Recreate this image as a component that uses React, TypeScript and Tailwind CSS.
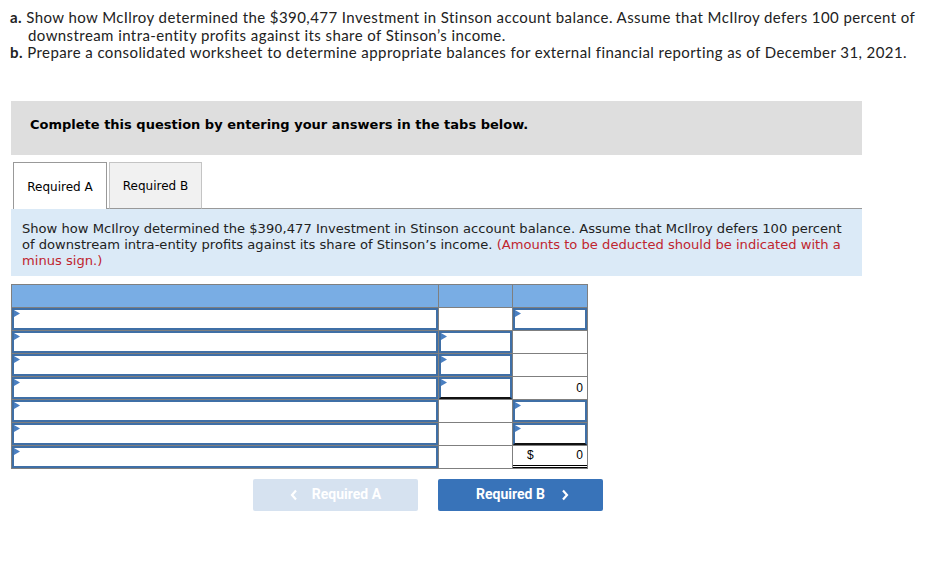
import React from "react";

const Tri = () => (
  <svg className="absolute left-0 top-0" width="6" height="8" viewBox="0 0 6 8">
    <path d="M0 0 L6 3.5 L0 7 Z" fill="#4a7fc1" />
  </svg>
);

type Cell = { kind: "input" | "empty" | "text"; text?: string; dollar?: boolean; under?: "single" | "double" };

const Input = ({ under }: { under?: "single" | "double" }) => (
  <div className={`relative h-full border-2 border-[#3f6fa6] bg-white ${under === "single" ? "border-b-[#111]" : ""}`}>
    <Tri />
  </div>
);

const rows: Cell[][] = [
  [{ kind: "input" }, { kind: "empty" }, { kind: "input" }],
  [{ kind: "input" }, { kind: "input" }, { kind: "empty" }],
  [{ kind: "input" }, { kind: "input" }, { kind: "empty" }],
  [{ kind: "input" }, { kind: "input", under: "single" }, { kind: "text", text: "0" }],
  [{ kind: "input" }, { kind: "empty" }, { kind: "input" }],
  [{ kind: "input" }, { kind: "empty" }, { kind: "input", under: "single" }],
  [{ kind: "input" }, { kind: "empty" }, { kind: "text", text: "0", dollar: true, under: "double" }],
];

export default function App() {
  return (
    <div className="w-[942px] h-[571px] bg-white relative overflow-hidden">
      <div className="pl-[10px] pt-[9px] text-[15px] leading-[17.5px] text-[#222] tracking-[0.42px]" style={{ fontFamily: "Lato, 'Open Sans', sans-serif" }}>
        <div>
          <span className="font-bold">a.</span> Show how McIlroy determined the $390,477 Investment in Stinson account balance. Assume that McIlroy defers 100 percent of
        </div>
        <div className="pl-[18px]">downstream intra-entity profits against its share of Stinson’s income.</div>
        <div>
          <span className="font-bold">b.</span> Prepare a consolidated worksheet to determine appropriate balances for external financial reporting as of December 31, 2021.
        </div>
      </div>

      <div className="ml-[11px] mt-[39px] w-[851px] h-[54px] bg-[#dedede] flex items-center pl-[19px] pb-[6px]">
        <span className="text-[13px] font-bold text-black" style={{ fontFamily: "'DejaVu Sans', Verdana, sans-serif" }}>
          Complete this question by entering your answers in the tabs below.
        </span>
      </div>

      <div className="ml-[11px] mt-[7px] w-[851px] flex items-end h-[47px]" style={{ fontFamily: "'DejaVu Sans', Verdana, sans-serif" }}>
        <div className="w-[2px] h-full" />
        <div className="w-[94px] h-[47px] border border-b-0 border-[#999] bg-white flex items-center justify-center text-[12px] text-black pt-[2px]">
          Required A
        </div>
        <div className="w-[2px] h-full border-b border-[#999]" />
        <div className="w-[93px] h-[47px] border border-[#c4c4c4] border-b-[#999] bg-[#f1f1f1] flex items-center justify-center text-[12px] text-black pt-[2px]">
          Required B
        </div>
        <div className="flex-1 h-full border-b border-[#999]" />
      </div>

      <div
        className="ml-[11px] w-[851px] h-[67px] bg-[#dbeaf7] pl-[11px] pt-[12px] text-[13.1px] leading-[16px] text-[#222]"
        style={{ fontFamily: "'DejaVu Sans', Verdana, sans-serif" }}
      >
        <div>Show how McIlroy determined the $390,477 Investment in Stinson account balance. Assume that McIlroy defers 100 percent</div>
        <div>
          of downstream intra-entity profits against its share of Stinson’s income.{" "}
          <span className="text-[#c0252f]">(Amounts to be deducted should be indicated with a</span>
        </div>
        <div className="text-[#c0252f]">minus sign.)</div>
      </div>

      <div className="ml-[11px] mt-[8px] w-[577px] border border-[#7f7f7f]" style={{ fontFamily: "Arial, 'Liberation Sans', sans-serif" }}>
        <div className="grid grid-cols-[427px_74px_74px] h-[22px] bg-[#79ade4]">
          <div className="border-r border-[#7f7f7f]" />
          <div className="border-r border-[#7f7f7f]" />
          <div />
        </div>
        {rows.map((r, i) => (
          <div key={i} className="grid grid-cols-[427px_74px_74px] h-[23px] border-t border-[#7f7f7f]">
            {r.map((c, j) => (
              <div key={j} className={`h-[22px] ${j < 2 ? "border-r border-[#7f7f7f]" : ""}`}>
                {c.kind === "input" && <Input under={c.under} />}
                {c.kind === "text" && (
                  <div
                    className={`h-full flex items-center justify-between px-[4px] text-[12px] text-black ${c.under === "double" ? "border-b-[3px] border-double border-black" : ""}`}
                  >
                    <span className="pl-[10px]">{c.dollar ? "$" : ""}</span>
                    <span>{c.text}</span>
                  </div>
                )}
              </div>
            ))}
          </div>
        ))}
      </div>

      <div className="ml-[253px] mt-[10px] flex gap-[20px]" style={{ fontFamily: "Roboto, Arial, sans-serif" }}>
        <div className="w-[165px] h-[32px] rounded-[2px] bg-[#d6e2f0] flex items-center justify-center gap-[14px] text-white font-bold text-[14px]">
          <svg width="8" height="12" viewBox="0 0 8 12"><path d="M6 1.5 L2 6 L6 10.5" stroke="white" strokeWidth="2.2" fill="none" /></svg>
          <span>Required A</span>
        </div>
        <div className="w-[165px] h-[32px] rounded-[2px] bg-[#3873b9] flex items-center justify-center gap-[16px] text-white font-bold text-[14px] pl-[4px]">
          <span>Required B</span>
          <svg width="8" height="12" viewBox="0 0 8 12"><path d="M2 1.5 L6 6 L2 10.5" stroke="white" strokeWidth="2.2" fill="none" /></svg>
        </div>
      </div>
    </div>
  );
}
